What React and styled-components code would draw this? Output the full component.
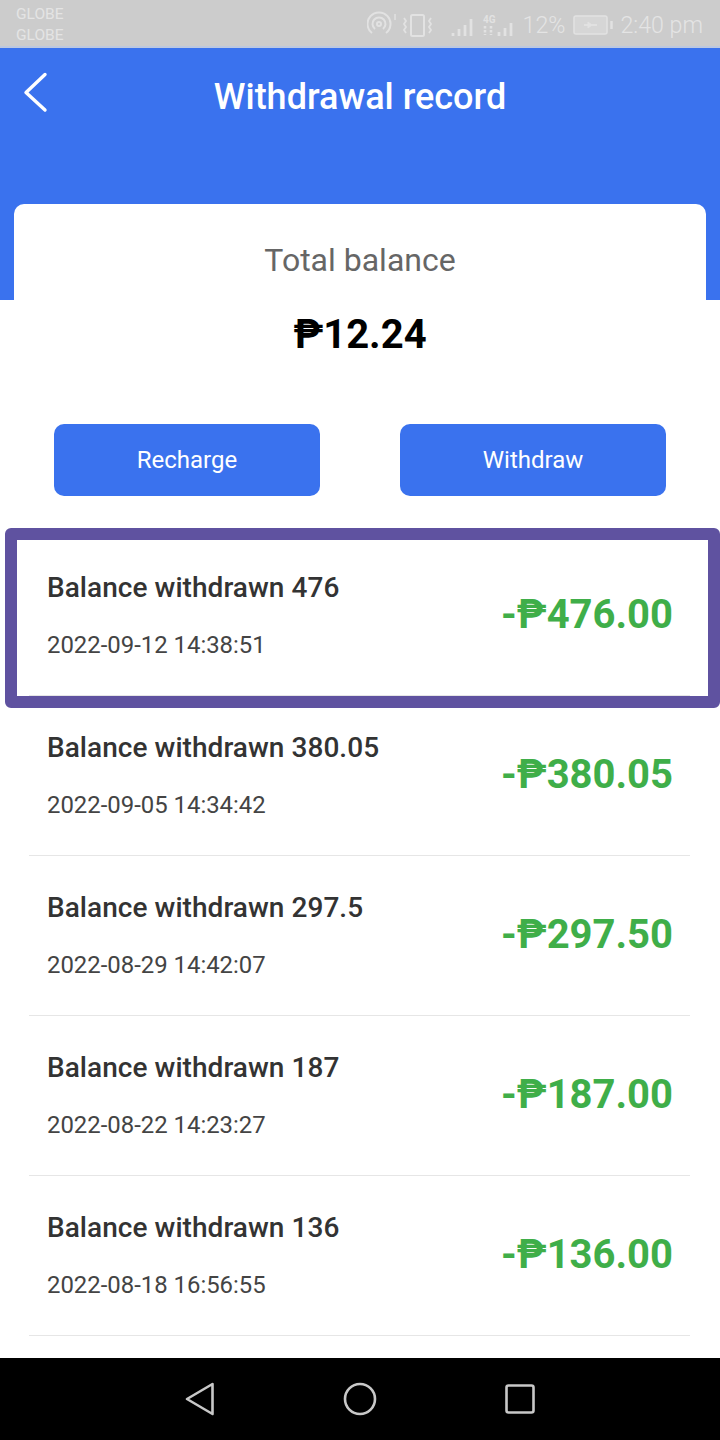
import React from 'react';
import styled, { createGlobalStyle } from 'styled-components';

const Global = createGlobalStyle`
  html, body { margin: 0; padding: 0; background: #fff; }
  * { box-sizing: border-box; }
  body { font-family: Roboto, "Liberation Sans", sans-serif; }
`;
const Screen = styled.div`
  width: 720px; height: 1440px; display: flex; flex-direction: column; overflow: hidden; background: #fff;
`;
const StatusBar = styled.div`
  height: 48px; flex: none; background: #cccccc; color: #e4e4e4;
  display: flex; align-items: center; justify-content: space-between; padding: 3px 17px 0 16px;
  border-bottom: 2px solid #bcc8e0;
`;
const Carriers = styled.div`
  display: flex; flex-direction: column; gap: 5px; font-size: 15.5px; line-height: 16px; margin-top: -1px;
`;
const StatusRight = styled.div`
  display: flex; align-items: center; font-size: 23.2px; line-height: 28px; font-weight: 300;
`;
const BatteryGap = styled.span` margin: 0 7px 0 8px; display: flex; `;
const Header = styled.header`
  height: 252px; flex: none; background: #3a72ee; color: #fff; position: relative;
  display: flex; justify-content: center; padding-top: 28px;
`;
const Back = styled.svg`
  position: absolute; left: 22px; top: 23px;
`;
const Title = styled.h1`
  margin: 0; font-size: 36px; line-height: 42px; font-weight: 500;
`;
const Card = styled.section`
  flex: none; position: relative; margin: -96px 14px 0; height: 320px; background: #fff; border-radius: 10px 10px 0 0;
  display: flex; flex-direction: column; align-items: center; padding-top: 36px;
`;
const BalanceLabel = styled.div`
  font-size: 32px; line-height: 40px; color: #666;
`;
const BalanceValue = styled.div`
  font-size: 40px; line-height: 48px; font-weight: 700; color: #000; margin-top: 31px;
`;
const Actions = styled.div`
  display: flex; justify-content: space-between; align-self: stretch; padding: 0 40px; margin-top: 65px;
`;
const ActionButton = styled.button`
  width: 266px; height: 72px; border: 0; border-radius: 10px; background: #3a72ee; color: #fff;
  font: 400 24px Roboto, sans-serif; padding: 0;
`;
const List = styled.div`
  flex: 1; position: relative; padding: 12px 30px 0 29px; overflow: hidden;
`;
const Highlight = styled.div`
  position: absolute; left: 5px; top: 4px; right: 0; height: 180px;
  border: 12px solid #5f52a0; border-radius: 6px; pointer-events: none;
`;
const Row = styled.div`
  height: 160px; display: flex; align-items: center; justify-content: space-between;
  padding: 0 17px 0 18px; border-bottom: 1px solid #e6e6e6;
`;
const RowText = styled.div`
  display: flex; flex-direction: column; gap: 25px; margin-top: 1px;
`;
const RowTitle = styled.div`
  font-size: 28px; line-height: 32px; font-weight: 500; color: #333; letter-spacing: 0.05px;
`;
const RowDate = styled.div`
  font-size: 23.9px; line-height: 32px; color: #444;
`;
const Amount = styled.div`
  font-size: 40px; line-height: 48px; font-weight: 700; color: #3fae49; margin-top: -2px;
`;
const NavBar = styled.nav`
  height: 82px; flex: none; background: #000; position: relative; z-index: 1;
  display: flex; align-items: center; justify-content: center; gap: 128px;
`;
const records = [
  ['476', '2022-09-12 14:38:51', '476.00'],
  ['380.05', '2022-09-05 14:34:42', '380.05'],
  ['297.5', '2022-08-29 14:42:07', '297.50'],
  ['187', '2022-08-22 14:23:27', '187.00'],
  ['136', '2022-08-18 16:56:55', '136.00'],
];

const StatusIcons = () => (
  <svg width="156" height="30" viewBox="0 0 156 30" fill="none" stroke="#e2e2e2" strokeWidth="2">
    <path d="M5 23a11.500 11.500 0 1 1 14 0" />
    <path d="M8 19a6.500 6.500 0 1 1 8 0" />
    <circle cx="12" cy="14" r="2" />
    <path d="M28 4v6" strokeWidth="1.4" />
    <rect x="44" y="5" width="13" height="21" rx="1.500" />
    <path d="M37 8l2 3-2 3 2 3-2 3 2 3M64 8l-2 3 2 3-2 3 2 3-2 3" strokeWidth="1.800" />
    <g strokeWidth="2.800">
      <path d="M86 26v-3M92 26v-7M98 26v-11M104 26v-17" />
      <path d="M132 26v-4M138 26v-8M144 26v-13" />
    </g>
    <text x="116" y="13" fontSize="10" fontWeight="700" fill="#e2e2e2" stroke="none" fontFamily="Roboto, sans-serif">4G</text>
    <path d="M118 16v9M124 16v9" strokeWidth="2.600" strokeDasharray="2.500 1.500" />
  </svg>
);
const Battery = () => (
  <svg width="40" height="22" viewBox="0 0 40 22" fill="none" stroke="#e2e2e2" strokeWidth="1.500">
    <rect x="1" y="2" width="33" height="18" rx="2" fill="#d6d6d6" />
    <path d="M38.500 7v8" strokeWidth="2.500" />
    <path d="M11 11h13" strokeWidth="1.800" />
    <path d="M15 8l4 3-4 3z" fill="#e2e2e2" strokeWidth="1" />
  </svg>
);

export default function App() {
  return (
    <Screen>
      <Global />
      <StatusBar>
        <Carriers>
          <span>GLOBE</span>
          <span>GLOBE</span>
        </Carriers>
        <StatusRight>
          <StatusIcons />
          <span>12%</span>
          <BatteryGap><Battery /></BatteryGap>
          <span>2:40 pm</span>
        </StatusRight>
      </StatusBar>
      <Header>
        <Back width="28" height="44" viewBox="0 0 28 44" fill="none" stroke="#fff" strokeWidth="3.400" strokeLinecap="round" strokeLinejoin="round">
          <path d="M23 3.500L4 21.500 23 39" />
        </Back>
        <Title>Withdrawal record</Title>
      </Header>
      <Card>
        <BalanceLabel>Total balance</BalanceLabel>
        <BalanceValue>₱12.24</BalanceValue>
        <Actions>
          <ActionButton>Recharge</ActionButton>
          <ActionButton>Withdraw</ActionButton>
        </Actions>
      </Card>
      <List>
        {records.map(([name, date, amount]) => (
          <Row key={date}>
            <RowText>
              <RowTitle>Balance withdrawn {name}</RowTitle>
              <RowDate>{date}</RowDate>
            </RowText>
            <Amount>-₱{amount}</Amount>
          </Row>
        ))}
        <Highlight />
      </List>
      <NavBar>
        <svg width="30" height="34" viewBox="0 0 30 34" fill="none" stroke="#c8c8c8" strokeWidth="2.600" strokeLinejoin="round">
          <path d="M27.500 2L2 17l25.500 15z" />
        </svg>
        <svg width="34" height="34" viewBox="0 0 34 34" fill="none" stroke="#c8c8c8" strokeWidth="2.600">
          <circle cx="17" cy="17" r="15" />
        </svg>
        <svg width="30" height="30" viewBox="0 0 30 30" fill="none" stroke="#c8c8c8" strokeWidth="2.600">
          <rect x="1.500" y="1.500" width="27" height="27" rx="2" />
        </svg>
      </NavBar>
    </Screen>
  );
}
